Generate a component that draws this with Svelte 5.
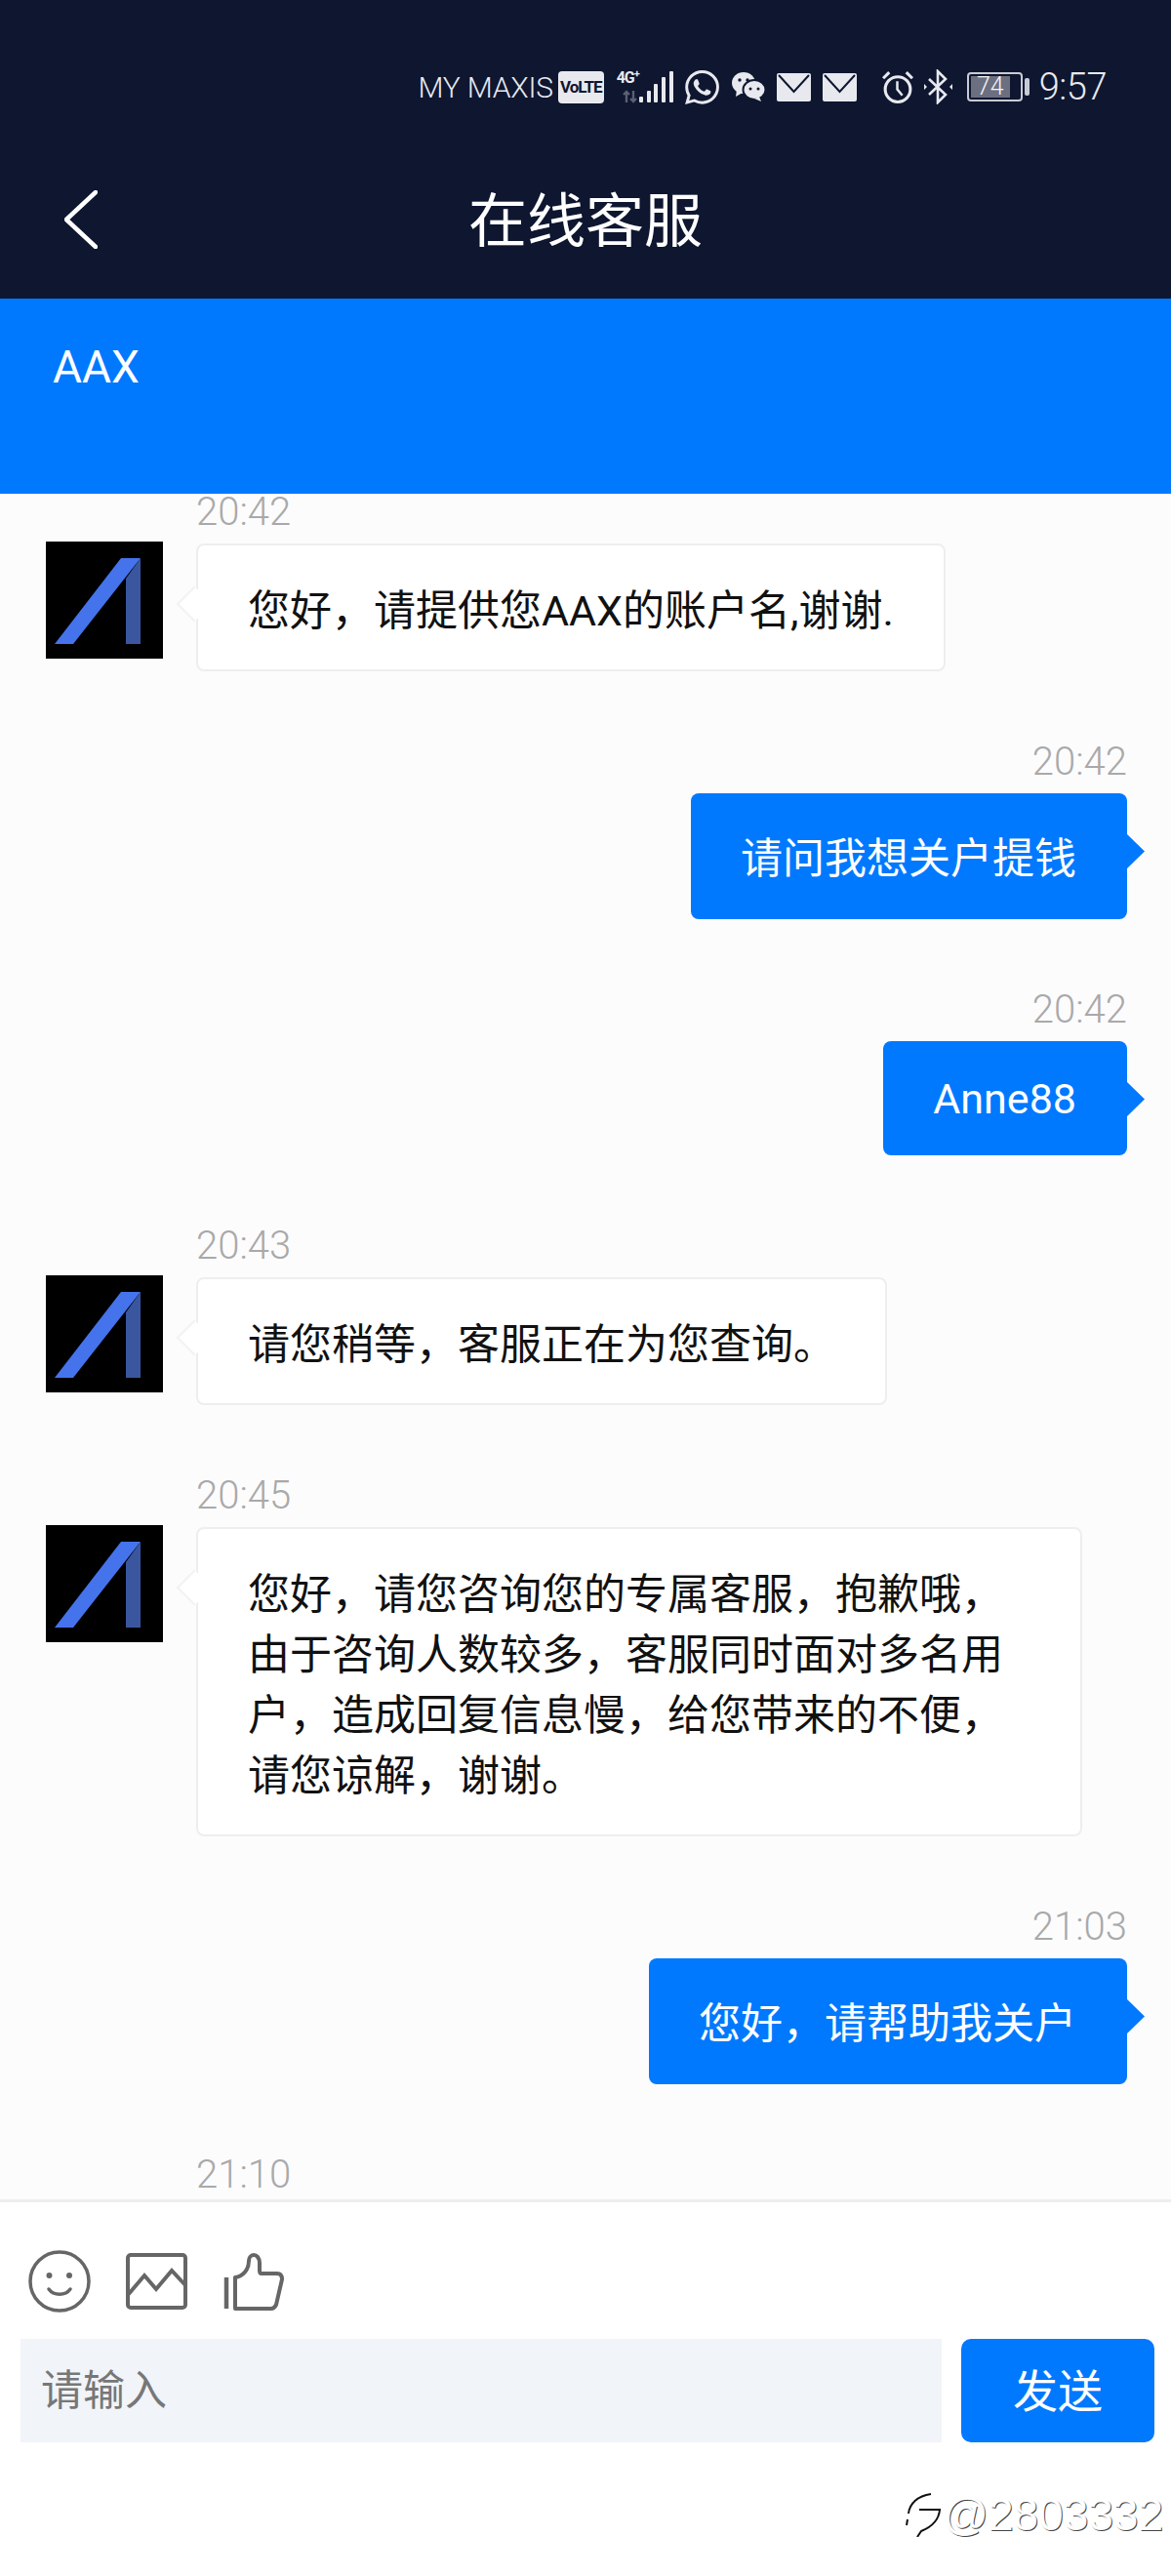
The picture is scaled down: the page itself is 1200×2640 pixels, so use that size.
<script>
  const messages = [
    { side: "left", time: "20:42", text: "您好，请提供您AAX的账户名,谢谢." },
    { side: "right", time: "20:42", text: "请问我想关户提钱" },
    { side: "right", time: "20:42", text: "Anne88", latin: true },
    { side: "left", time: "20:43", text: "请您稍等，客服正在为您查询。" },
    {
      side: "left",
      time: "20:45",
      text: "您好，请您咨询您的专属客服，抱歉哦，由于咨询人数较多，客服同时面对多名用户，造成回复信息慢，给您带来的不便，请您谅解，谢谢。",
    },
    { side: "right", time: "21:03", text: "您好，请帮助我关户" },
    { side: "left", time: "21:10", text: "" },
  ];
</script>

<div class="page">
  <header class="top">
    <div class="status">
      <span class="carrier">MY MAXIS</span>
      <span class="volte">VoLTE</span>
      <div class="network">
        <span class="net-label">4G<sup>+</sup></span>
        <svg class="net-arrows" width="18" height="14" viewBox="0 0 18 14">
          <path d="M5 13V2M2 5l3-3 3 3M12 1v11M9 9l3 3 3-3" fill="none" stroke="#5a6072" stroke-width="2.4" />
        </svg>
      </div>
      <svg class="signal" width="35" height="36" viewBox="0 0 35 36">
        <rect x="0" y="28" width="4" height="6" rx="1" fill="#e8e9ee" />
        <rect x="8" y="22" width="4" height="12" rx="1" fill="#e8e9ee" />
        <rect x="15" y="15" width="4" height="19" rx="1" fill="#e8e9ee" />
        <rect x="23" y="8" width="4" height="26" rx="1" fill="#e8e9ee" />
        <rect x="31" y="2" width="4" height="32" rx="1" fill="#e8e9ee" />
      </svg>
      <svg class="whatsapp" width="35" height="35" viewBox="0 0 24 24">
        <path
          fill="#e8e9ee"
          d="M17.472 14.382c-.297-.149-1.758-.867-2.03-.967-.273-.099-.471-.148-.67.15-.197.297-.767.966-.94 1.164-.173.199-.347.223-.644.075-.297-.15-1.255-.463-2.39-1.475-.883-.788-1.48-1.761-1.653-2.059-.173-.297-.018-.458.13-.606.134-.133.298-.347.446-.52.149-.174.198-.298.298-.497.099-.198.05-.371-.025-.52-.075-.149-.669-1.612-.916-2.207-.242-.579-.487-.5-.669-.51-.173-.008-.371-.01-.57-.01-.198 0-.52.074-.792.372-.272.297-1.04 1.016-1.04 2.479 0 1.462 1.065 2.875 1.213 3.074.149.198 2.096 3.2 5.077 4.487.709.306 1.262.489 1.694.625.712.227 1.36.195 1.871.118.571-.085 1.758-.719 2.006-1.413.248-.694.248-1.289.173-1.413-.074-.124-.272-.198-.57-.347m-5.421 7.403h-.004a9.87 9.87 0 01-5.031-1.378l-.361-.214-3.741.982.998-3.648-.235-.374a9.86 9.86 0 01-1.51-5.26c.001-5.45 4.436-9.884 9.888-9.884 2.64 0 5.122 1.03 6.988 2.898a9.825 9.825 0 012.893 6.994c-.003 5.45-4.437 9.884-9.885 9.884m8.413-18.297A11.815 11.815 0 0012.05 0C5.495 0 .16 5.335.157 11.892c0 2.096.547 4.142 1.588 5.945L.057 24l6.305-1.654a11.882 11.882 0 005.683 1.448h.005c6.554 0 11.89-5.335 11.893-11.893a11.821 11.821 0 00-3.48-8.413z"
        />
      </svg>
      <svg class="wechat" width="35" height="30" viewBox="0 0 35 30">
        <ellipse cx="13" cy="11" rx="12" ry="11" fill="#e8e9ee" />
        <path d="M6 18l-1 7 7-4z" fill="#e8e9ee" />
        <ellipse cx="24" cy="18" rx="11.5" ry="10" fill="#e8e9ee" stroke="#0e1630" stroke-width="2" />
        <path d="M29 25l2 5-7-3z" fill="#e8e9ee" />
        <circle cx="9" cy="8" r="1.7" fill="#0e1630" />
        <circle cx="17" cy="8" r="1.7" fill="#0e1630" />
        <circle cx="20" cy="17" r="1.5" fill="#0e1630" />
        <circle cx="28" cy="17" r="1.5" fill="#0e1630" />
      </svg>
      <svg class="mail" width="35" height="29" viewBox="0 0 35 29">
        <rect width="35" height="29" rx="2" fill="#e8e9ee" />
        <path d="M2 2l15.500 17L33 2" fill="none" stroke="#0e1630" stroke-width="2" />
      </svg>
      <svg class="mail" width="35" height="29" viewBox="0 0 35 29">
        <rect width="35" height="29" rx="2" fill="#e8e9ee" />
        <path d="M2 2l15.500 17L33 2" fill="none" stroke="#0e1630" stroke-width="2" />
      </svg>
      <svg class="alarm" width="34" height="35" viewBox="0 0 33 34">
        <circle cx="16.500" cy="19" r="12.500" fill="none" stroke="#e8e9ee" stroke-width="3" />
        <path d="M16 11v8l5 6" fill="none" stroke="#e8e9ee" stroke-width="2.400" />
        <path d="M2 8l6-6M31 8l-6-6" fill="none" stroke="#e8e9ee" stroke-width="3" />
      </svg>
      <svg class="bluetooth" width="29" height="36" viewBox="0 0 29 36">
        <path d="M5 10l17 16-8 8V2l8 8L5 26" fill="none" stroke="#e8e9ee" stroke-width="2.600" />
        <path d="M0 15l3 3-3 3zM29 15l-3 3 3 3z" fill="#e8e9ee" />
      </svg>
      <div class="battery">
        <div class="battery-body">
          <div class="battery-fill">74</div>
        </div>
        <div class="battery-tip"></div>
      </div>
      <span class="clock">9:57</span>
    </div>

    <div class="nav">
      <svg class="back" width="34" height="60" viewBox="0 0 34 60">
        <path d="M32 2L2 30l30 28" fill="none" stroke="#fff" stroke-width="4.500" stroke-linecap="round" stroke-linejoin="round" />
      </svg>
      <h1 class="title">在线客服</h1>
      <div></div>
    </div>
  </header>

  <div class="banner">AAX</div>

  <main class="chat">
    <div class="list">
      {#each messages as msg}
        <div class="row {msg.side}">
          {#if msg.side === "left" && msg.text}
            <svg class="avatar" width="120" height="120" viewBox="0 0 120 120">
              <rect width="120" height="120" fill="#000" />
              <path d="M82 105h15V17l-15 21z" fill="#3a569e" />
              <path d="M9 105h19L97 17H77z" fill="#4573ec" />
            </svg>
          {:else if msg.side === "left"}
            <div class="avatar-slot"></div>
          {/if}
          <div class="col">
            <div class="time">{msg.time}</div>
            {#if msg.text}
              <div class="bubble" class:latin={msg.latin}>{msg.text}</div>
            {/if}
          </div>
        </div>
      {/each}
    </div>
  </main>

  <footer class="footer">
    <div class="tools">
      <svg width="64" height="64" viewBox="0 0 64 64">
        <ellipse cx="32" cy="32" rx="30" ry="30" fill="none" stroke="#666" stroke-width="3.500" />
        <circle cx="21.500" cy="26" r="3" fill="#666" />
        <circle cx="42" cy="26" r="3" fill="#666" />
        <path d="M21 40c5 7 17 7 22 0" fill="none" stroke="#666" stroke-width="3.500" stroke-linecap="round" />
      </svg>
      <svg width="64" height="64" viewBox="0 0 64 64">
        <rect x="3" y="5" width="59" height="54" rx="3" fill="none" stroke="#666" stroke-width="4" />
        <path d="M3 46l17-20 12 14 16-19 14 15" fill="none" stroke="#666" stroke-width="4" />
      </svg>
      <svg class="thumb" width="64" height="64" viewBox="0 0 64 64">
        <path d="M3 28v32" fill="none" stroke="#666" stroke-width="4.500" />
        <path
          d="M12 60h37c3 0 4-2 5-4l6-26c0-4-2-6-5-6H39c-2 0-2-1-2-3V13c0-5-3-8-6-8s-5 3-5 6c0 9-6 16-14 17z"
          fill="none"
          stroke="#666"
          stroke-width="4"
          stroke-linejoin="round"
        />
      </svg>
    </div>
    <div class="composer">
      <div class="input">请输入</div>
      <button class="send">发送</button>
    </div>
    <div class="watermark">
      <svg width="36" height="46" viewBox="0 0 36 46">
        <path d="M26 2C12 4 4 12 3 22M2 28l-1 6M14 18h22M35 18c-1 12-9 18-19 22l-4 6" fill="none" stroke="#111" stroke-width="2" />
      </svg>
      <span>@2803332</span>
    </div>
  </footer>
</div>

<style>
  :global(body) {
    margin: 0;
    background: #fff;
  }

  .page {
    width: 1200px;
    height: 2640px;
    display: flex;
    flex-direction: column;
    font-family: Roboto, "Noto Sans CJK SC", sans-serif;
  }

  .top {
    height: 306px;
    background: #0e1630;
    color: #e8e9ee;
    display: flex;
    flex-direction: column;
    flex-shrink: 0;
  }

  .status {
    height: 178px;
    padding: 0 66px 0 0;
    box-sizing: border-box;
    display: flex;
    justify-content: flex-end;
    align-items: center;
  }

  .carrier {
    font-size: 30px;
    font-weight: 300;
    letter-spacing: -0.2px;
    white-space: nowrap;
  }

  .volte {
    margin-left: 5px;
    width: 47px;
    height: 33px;
    border-radius: 4px;
    background: #e8e9ee;
    color: #0e1630;
    font-size: 17px;
    font-weight: 700;
    line-height: 33px;
    text-align: center;
    letter-spacing: -1px;
  }

  .network {
    margin-left: 9px;
    width: 27px;
    height: 34px;
    display: flex;
    flex-direction: column;
    align-items: flex-end;
  }

  .net-label {
    font-size: 16px;
    font-weight: 700;
    line-height: 16px;
    letter-spacing: -1px;
    white-space: nowrap;
  }

  .net-label sup {
    font-size: 11px;
    line-height: 0;
  }

  .net-arrows {
    margin-top: 4px;
  }

  .whatsapp,
  .wechat,
  .mail {
    margin-left: 12px;
  }

  .alarm {
    margin-left: 25px;
  }

  .bluetooth {
    margin-left: 10px;
  }

  .battery {
    margin-left: 15px;
    display: flex;
    align-items: center;
    gap: 2px;
  }

  .battery-body {
    width: 57px;
    height: 30px;
    box-sizing: border-box;
    border: 2px solid #c9cbd4;
    border-radius: 4px;
    padding: 2px;
  }

  .battery-fill {
    width: 40px;
    height: 100%;
    background: #6c6f7f;
    color: #f2f2f5;
    font-size: 25px;
    font-weight: 300;
    line-height: 22px;
    text-align: center;
  }

  .battery-tip {
    width: 5px;
    height: 18px;
    background: #c9cbd4;
    border-radius: 2px;
  }

  .clock {
    margin-left: 10px;
    font-size: 38px;
    font-weight: 300;
    letter-spacing: -0.5px;
    white-space: nowrap;
  }

  .nav {
    flex: 1;
    display: grid;
    grid-template-columns: 1fr auto 1fr;
    align-items: center;
    padding: 0 0 28px 66px;
  }

  .back {
    margin-bottom: 7px;
  }

  .title {
    margin: 0;
    color: #fff;
    font-size: 60px;
    font-weight: 400;
    line-height: 88px;
    transform: translateX(-33px);
  }

  .banner {
    height: 200px;
    box-sizing: border-box;
    flex-shrink: 0;
    background: #0079fe;
    color: #fff;
    font-size: 46px;
    line-height: 54px;
    padding: 43px 54px 0;
  }

  .chat {
    flex: 1;
    min-height: 0;
    background: #fcfcfd;
  }

  .list {
    display: flex;
    flex-direction: column;
    gap: 74px;
  }

  .row {
    display: flex;
  }

  .row.left {
    padding-left: 47px;
    gap: 34px;
  }

  .row.right {
    justify-content: flex-end;
    padding-right: 45px;
  }

  .avatar {
    flex-shrink: 0;
    margin-top: 49px;
  }

  .avatar-slot {
    width: 120px;
  }

  .col {
    display: flex;
    flex-direction: column;
    min-width: 0;
  }

  .right .col {
    align-items: flex-end;
  }

  .time {
    color: #a9a9a9;
    font-size: 40px;
    font-weight: 300;
    line-height: 38px;
    margin-bottom: 13px;
  }

  .bubble {
    position: relative;
    box-sizing: border-box;
    max-width: 908px;
    border-radius: 8px;
    font-size: 43px;
    line-height: 62px;
  }

  .left .bubble {
    background: #fff;
    border: 2px solid #eeeeef;
    color: #111;
    padding: 36px 51px 29px;
  }

  .left .bubble::before {
    content: "";
    position: absolute;
    left: -17px;
    top: 47px;
    width: 26px;
    height: 26px;
    box-sizing: border-box;
    background: #fff;
    border-left: 2px solid #f2f2f3;
    border-bottom: 2px solid #f2f2f3;
    transform: rotate(45deg);
  }

  .right .bubble {
    background: #0079fe;
    color: #fff;
    padding: 36px 52px 31px 51px;
  }

  .right .bubble::after {
    content: "";
    position: absolute;
    right: -18px;
    top: 41px;
    width: 19px;
    height: 37px;
    background: #0079fe;
    clip-path: polygon(0 0, 100% 50%, 0 100%);
  }

  .right .bubble.latin {
    line-height: 50px;
    padding: 34px 52px 33px 51px;
  }

  .footer {
    flex-shrink: 0;
    height: 386px;
    box-sizing: border-box;
    background: #fff;
    border-top: 3px solid #eeeeef;
  }

  .tools {
    display: flex;
    gap: 35px;
    padding: 49px 0 27px 29px;
  }

  .tools svg {
    display: block;
  }

  .tools .thumb {
    margin-left: 2px;
  }

  .composer {
    display: flex;
    gap: 20px;
    padding: 0 17px 0 21px;
  }

  .input {
    flex: 1;
    height: 106px;
    background: #f1f4f8;
    color: #777;
    font-size: 43px;
    line-height: 106px;
    padding-left: 21px;
  }

  .send {
    width: 198px;
    height: 106px;
    border: none;
    border-radius: 10px;
    background: #0079fe;
    color: #fff;
    font-family: inherit;
    font-size: 46px;
    padding: 0 0 6px;
  }

  .watermark {
    display: flex;
    justify-content: flex-end;
    align-items: center;
    gap: 2px;
    margin-top: 46px;
    padding-right: 8px;
    font-size: 46px;
    line-height: 56px;
    font-family: "Liberation Sans", sans-serif;
    color: #fff;
    text-shadow: 1px 1px 0 #444;
  }
</style>
